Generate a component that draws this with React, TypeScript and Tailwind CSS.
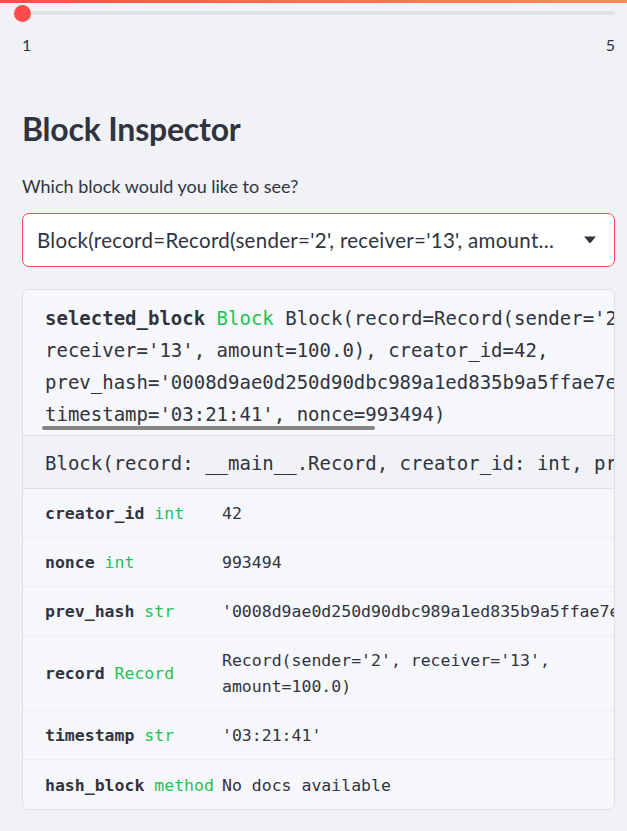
import React from "react";

const sans = { fontFamily: '"Lato", "Noto Sans", sans-serif' };
const mono = { fontFamily: '"DejaVu Sans Mono", "Liberation Mono", monospace' };

const rows: { name: string; type: string; value: string[] }[] = [
  { name: "creator_id", type: "int", value: ["42"] },
  { name: "nonce", type: "int", value: ["993494"] },
  {
    name: "prev_hash",
    type: "str",
    value: ["'0008d9ae0d250d90dbc989a1ed835b9a5ffae7e11c1a'"],
  },
  {
    name: "record",
    type: "Record",
    value: ["Record(sender='2', receiver='13',", "amount=100.0)"],
  },
  { name: "timestamp", type: "str", value: ["'03:21:41'"] },
  { name: "hash_block", type: "method", value: ["No docs available"] },
];

export default function App() {
  return (
    <div className="min-h-[831px] bg-[#f0f2f6] text-[#31333f]" style={sans}>
      <div className="h-[3px] bg-gradient-to-r from-[#ff4b4b] to-[#ff8c5c]" />

      <div className="pl-[22px] pr-[12px]">
        {/* slider */}
        <div className="relative mt-[2px] h-[16px] flex items-center">
          <div className="h-[4px] w-full rounded-full bg-[#dde1ea]" />
          <div className="absolute left-[-8px] top-0 h-[17px] w-[17px] rounded-full bg-[#ff4b4b]" />
        </div>
        <div className="mt-[14px] flex justify-between text-[16px] leading-[20px]">
          <span>1</span>
          <span>5</span>
        </div>

        <h2 className="mt-[54px] text-[32px] font-bold leading-[40px] tracking-[-0.2px]">
          Block Inspector
        </h2>

        <div className="mt-[25px] text-[18px] leading-[24px]">
          Which block would you like to see?
        </div>

        <div className="mt-[15px] flex h-[54px] items-center justify-between rounded-[7px] border border-[#ff4b4b] bg-white pl-[14px] pr-[17px]">
          <span className="text-[20.5px] tracking-[0.3px]">
            Block(record=Record(sender='2', receiver='13', amount…
          </span>
          <svg width="14" height="8" viewBox="0 0 14 8">
            <path d="M1 0.5 L13 0.5 L7 7.5 Z" fill="#31333f" />
          </svg>
        </div>

        {/* help card */}
        <div className="mt-[22px] overflow-hidden rounded-[6px] border border-[#dcdfe6] bg-[#f6f7fa]" style={mono}>
          <div className="pl-[22px] pt-[12px] text-[19px] leading-[32px] whitespace-pre">
            <div>
              <span className="font-bold">selected_block</span>{" "}
              <span className="text-[#21c354]">Block</span>{" "}
              Block(record=Record(sender='2',
            </div>
            <div>receiver='13', amount=100.0), creator_id=42,</div>
            <div>prev_hash='0008d9ae0d250d90dbc989a1ed835b9a5ffae7e11c1a',</div>
            <div>timestamp='03:21:41', nonce=993494)</div>
            <div className="mt-[-4px] mb-[5px] ml-[-3px] h-[4px] w-[333px] rounded-full bg-[#858585]" />
          </div>

          <div className="border-t border-b border-[#dcdfe6] bg-[#f0f2f6] pl-[22px] h-[54px] flex items-center pt-[3px] text-[19px] whitespace-pre">
            Block(record: __main__.Record, creator_id: int, prev_hash: str)
          </div>

          <div className="text-[16.5px] leading-[26px]">
            {rows.map((r, i) => (
              <div
                key={r.name}
                className={`flex items-center pl-[22px] pt-[2px] whitespace-pre ${
                  r.value.length > 1 ? "min-h-[75px]" : "h-[49px]"
                } ${i < rows.length - 1 ? "border-b border-dotted border-[#e3e5ea]" : "h-[48px]"}`}
              >
                <div className="w-[177px] shrink-0">
                  <span className="font-bold">{r.name}</span>{" "}
                  <span className="text-[#21c354]">{r.type}</span>
                </div>
                <div>
                  {r.value.map((v) => (
                    <div key={v}>{v}</div>
                  ))}
                </div>
              </div>
            ))}
          </div>
        </div>
      </div>
    </div>
  );
}
